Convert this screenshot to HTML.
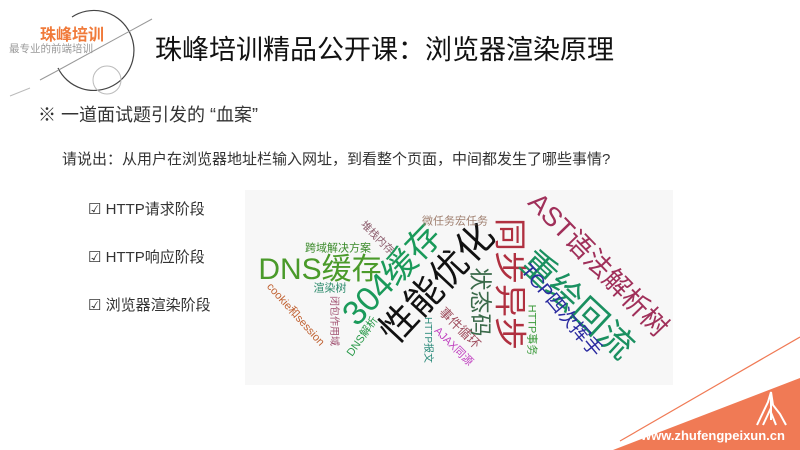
<!DOCTYPE html>
<html><head><meta charset="utf-8"><style>
body{margin:0;width:800px;height:450px;overflow:hidden;background:#fff;position:relative;font-family:"Liberation Sans","Noto Sans CJK SC",sans-serif;}
.a{position:absolute;white-space:nowrap;}
.w{position:absolute;white-space:nowrap;transform-origin:center;line-height:1;}
</style></head><body>
<svg class="a" style="left:0;top:0" width="800" height="450">
<path d="M58 68 A40 40 0 1 0 72 17" fill="none" stroke="#444" stroke-width="1.2"/>
<circle cx="107" cy="80" r="14" fill="none" stroke="#bbb" stroke-width="1"/>
<line x1="55" y1="72" x2="152" y2="19" stroke="#999" stroke-width="1"/>
<line x1="40" y1="80" x2="55" y2="72" stroke="#999" stroke-width="1"/>
<line x1="10" y1="96" x2="30" y2="88" stroke="#bbb" stroke-width="1"/>
<polygon points="613,450 800,378 800,450" fill="#f07a55"/>
<line x1="620" y1="441" x2="800" y2="337" stroke="#f07a55" stroke-width="1.2"/>
<path d="M757 425 L768 402 L771 392 L773 405 L780 414 L786 425 M763 425 L770 410 L776 425 M771 392 L771 420" fill="none" stroke="#fff" stroke-width="2"/>
</svg>
<div class="a" style="left:40px;top:21px;font-size:16px;font-weight:bold;color:#f07a3a">珠峰培训</div>
<div class="a" style="left:9px;top:41px;font-size:10.5px;color:#999">最专业的前端培训</div>
<div class="a" style="left:155px;top:28px;font-size:27px;color:#111">珠峰培训精品公开课：浏览器渲染原理</div>
<div class="a" style="left:38px;top:101px;font-size:18px;color:#333">※ 一道面试题引发的 “血案”</div>
<div class="a" style="left:62px;top:148px;font-size:15px;color:#333">请说出：从用户在浏览器地址栏输入网址，到看整个页面，中间都发生了哪些事情?</div>
<div class="a" style="left:88px;top:198px;font-size:15px;color:#333">☑ HTTP请求阶段</div>
<div class="a" style="left:88px;top:246px;font-size:15px;color:#333">☑ HTTP响应阶段</div>
<div class="a" style="left:88px;top:294px;font-size:15px;color:#333">☑ 浏览器渲染阶段</div>
<div class="a" style="left:245px;top:190px;width:428px;height:195px;background:#f7f7f7"></div>
<div class="a" style="left:641px;top:428px;font-size:13px;font-weight:bold;color:#fff">www.zhufengpeixun.cn</div>
<div id="wc"></div>
<script>
var W=[["DNS缓存",320,270,0,30,"#4a9a2a"],["304缓存",392,275,-46,34,"#1a9a5a"],["性能优化",437,283,-47,37,"#111"],["同步异步",510,284,90,33,"#b03040"],["AST语法解析树",598,265,46,27,"#a0305a"],["重绘回流",577,305,43,35,"#1a9060"],["TCP四次挥手",561,311,50,19,"#2a2aa0"],["状态码",480,302,90,23,"#3a6a4a"],["微任务宏任务",455,222,0,11,"#a08070"],["堆栈内存",377,238,45,10.5,"#8a5a6a"],["跨域解决方案",338,249,0,11,"#3a8a2a"],["渲染树",330,289,0,11,"#2a8a6a"],["闭包作用域",333,321,90,10,"#a05070"],["cookie和session",295,315,48,11,"#c06030"],["DNS解析",363,337,-55,11,"#2a9a4a"],["HTTP报文",427,340,90,10,"#2a8a7a"],["AJAX同源",453,347,45,11,"#c040c0"],["事件循环",460,328,45,13,"#a05060"],["HTTP事务",531,330,90,11,"#3a9a3a"]];
var h="";W.forEach(function(w){h+='<span class="w" style="left:'+w[1]+'px;top:'+w[2]+'px;font-size:'+w[4]+'px;color:'+w[5]+';transform:translate(-50%,-50%) rotate('+w[3]+'deg)">'+w[0]+'</span>';});
document.getElementById("wc").innerHTML=h;
</script>
</body></html>
